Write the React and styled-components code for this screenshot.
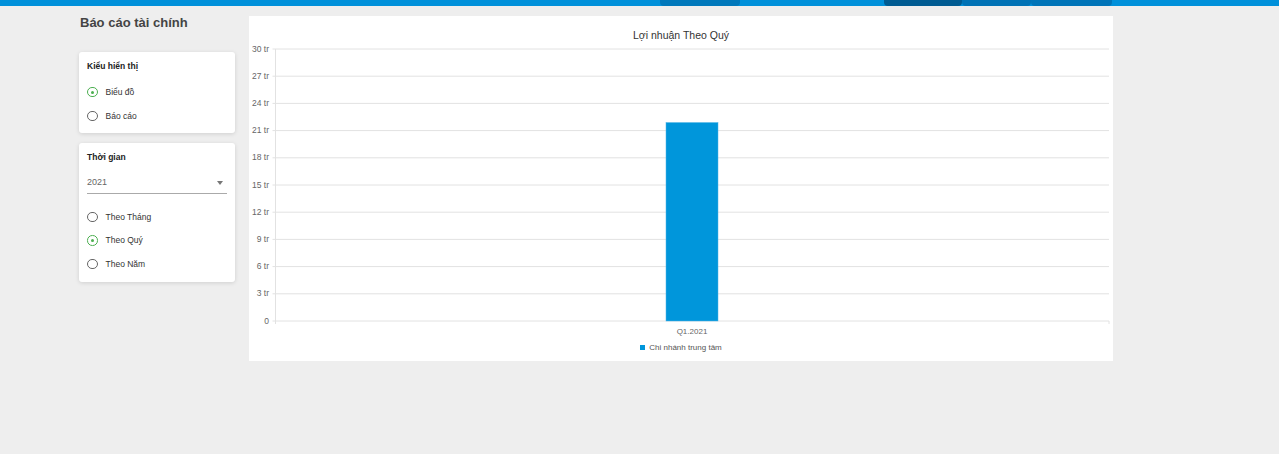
import React from "react";
import styled, { createGlobalStyle } from "styled-components";

const GlobalStyle = createGlobalStyle`
  html, body { margin: 0; padding: 0; background: #eeeeee; }
  body { font-family: "Liberation Sans", Arial, sans-serif; color: #333; }
  * { box-sizing: border-box; }
`;

const TopBar = styled.div`
  height: 6px;
  background: #0090da;
  display: flex;
  padding-left: 660px;
`;

const Tab = styled.div`
  width: ${(p) => p.$w}px;
  margin-left: ${(p) => p.$ml || 0}px;
  background: ${(p) => p.$c};
  border-radius: 0 0 4px 4px;
`;

const Page = styled.div`
  display: flex;
  align-items: flex-start;
  gap: 14px;
  padding: 10px 0 0 79px;
`;

const LeftCol = styled.div`
  width: 156px;
  display: flex;
  flex-direction: column;
`;

const PageTitle = styled.h1`
  margin: 0 0 22px 1px;
  font-size: 13px;
  line-height: 14px;
  font-weight: bold;
  color: #444;
`;

const Card = styled.div`
  background: #fff;
  border-radius: 3px;
  box-shadow: 0 1px 4px rgba(0, 0, 0, 0.13);
  padding: 8px 8px ${(p) => p.$pb || 6}px;
  margin-top: ${(p) => p.$mt || 0}px;
`;

const CardHeader = styled.div`
  font-size: 8.5px;
  line-height: 12px;
  font-weight: bold;
  color: #222;
`;

const RadioList = styled.div`
  display: flex;
  flex-direction: column;
  margin-top: ${(p) => p.$mt}px;
`;

const RadioRow = styled.label`
  display: flex;
  align-items: center;
  height: ${(p) => p.$h || 24}px;
  gap: 8px;
  font-size: 8.5px;
  color: #333;
`;

const RadioCircle = styled.span`
  width: 10.5px;
  height: 10.5px;
  border-radius: 50%;
  border: 1.3px solid ${(p) => (p.$on ? "#4caf50" : "#666")};
  display: flex;
  align-items: center;
  justify-content: center;
  &::after {
    content: "";
    width: 3px;
    height: 3px;
    border-radius: 50%;
    background: ${(p) => (p.$on ? "#4caf50" : "transparent")};
  }
`;

const Select = styled.div`
  margin-top: 6px;
  height: 25px;
  border-bottom: 1px solid #aaa;
  display: flex;
  align-items: center;
  justify-content: space-between;
  font-size: 9px;
  color: #666;
  padding: 1px 4px 0 0;
`;

const Caret = styled.span`
  width: 0;
  height: 0;
  border-left: 3.5px solid transparent;
  border-right: 3.5px solid transparent;
  border-top: 4px solid #777;
  margin-top: 2px;
`;

const Panel = styled.div`
  width: 864px;
  background: #fff;
  display: flex;
  flex-direction: column;
  padding-bottom: 7px;
`;

const ChartTitle = styled.div`
  padding-top: 12px;
  font-size: 10.5px;
  line-height: 14px;
  color: #333;
  text-align: center;
`;

const Legend = styled.div`
  height: 14px;
  display: flex;
  align-items: center;
  justify-content: center;
  gap: 4px;
  font-size: 8px;
  color: #555;
`;

const LegendSwatch = styled.span`
  width: 5px;
  height: 5px;
  background: #0096db;
`;

const BarChart = () => {
  const top = 7;
  const step = 27.2;
  const bottom = top + step * 10;
  const axisX = 26.5;
  const right = 860;
  const value = 22;
  const barTop = bottom - (value / 30) * (bottom - top) + 1;
  const rows = Array.from({ length: 11 }, (_, i) => i);
  return (
    <svg width="864" height="298" viewBox="0 0 864 298">
      {rows.map((i) => {
        const y = top + i * step;
        const v = 30 - i * 3;
        return (
          <g key={i}>
            <line x1={axisX - 3} x2={right} y1={y} y2={y} stroke="#e2e2e2" strokeWidth="1" />
            <text
              x="20"
              y={y - 0.5}
              textAnchor="end"
              dominantBaseline="central"
              fontSize="8.5"
              fill="#666"
              fontFamily="Liberation Sans, Arial, sans-serif"
            >
              {v === 0 ? "0" : `${v} tr`}
            </text>
          </g>
        );
      })}
      <line x1={axisX} x2={axisX} y1={top} y2={bottom + 3} stroke="#e2e2e2" strokeWidth="1" />
      <line x1={right} x2={right} y1={bottom} y2={bottom + 3} stroke="#e2e2e2" strokeWidth="1" />
      <rect x="417" y={barTop} width="52" height={bottom - barTop} fill="#0096db" stroke="#4fb3e6" strokeWidth="0.5" />
      <text
        x="443"
        y={bottom + 10}
        textAnchor="middle"
        dominantBaseline="central"
        fontSize="8"
        fill="#666"
        fontFamily="Liberation Sans, Arial, sans-serif"
      >
        Q1.2021
      </text>
    </svg>
  );
};

export default function App() {
  return (
    <>
      <GlobalStyle />
      <TopBar>
        <Tab $w={80} $c="#0078bb" />
        <Tab $ml={144} $w={78} $c="#005b92" />
        <Tab $w={69} $c="#0072b5" />
        <Tab $w={81} $c="#0074b8" />
      </TopBar>
      <Page>
        <LeftCol>
          <PageTitle>Báo cáo tài chính</PageTitle>
          <Card $pb={5}>
            <CardHeader>Kiểu hiển thị</CardHeader>
            <RadioList $mt={8}>
              <RadioRow>
                <RadioCircle $on />
                Biểu đồ
              </RadioRow>
              <RadioRow>
                <RadioCircle />
                Báo cáo
              </RadioRow>
            </RadioList>
          </Card>
          <Card $mt={10} $pb={6}>
            <CardHeader>Thời gian</CardHeader>
            <Select>
              <span>2021</span>
              <Caret />
            </Select>
            <RadioList $mt={11}>
              <RadioRow $h={23.5}>
                <RadioCircle />
                Theo Tháng
              </RadioRow>
              <RadioRow $h={23.5}>
                <RadioCircle $on />
                Theo Quý
              </RadioRow>
              <RadioRow $h={23.5}>
                <RadioCircle />
                Theo Năm
              </RadioRow>
            </RadioList>
          </Card>
        </LeftCol>
        <Panel>
          <ChartTitle>Lợi nhuận Theo Quý</ChartTitle>
          <BarChart />
          <Legend>
            <LegendSwatch />
            Chi nhánh trung tâm
          </Legend>
        </Panel>
      </Page>
    </>
  );
}
